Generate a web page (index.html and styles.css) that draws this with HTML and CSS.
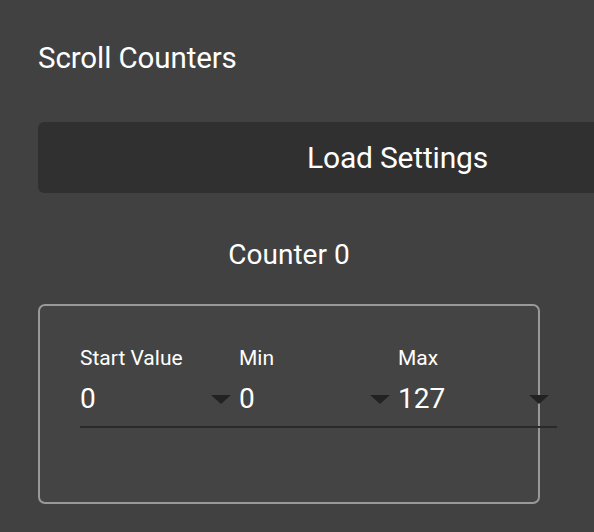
FILE: index.html
```html
<!DOCTYPE html>
<html lang="en">
<head>
<meta charset="utf-8">
<title>Scroll Counters</title>
<link rel="stylesheet" href="styles.css">
</head>
<body>
<div class="page">
  <h1 class="title">Scroll Counters</h1>
  <button class="load-btn" type="button">Load Settings</button>
  <section class="counter">
    <h2 class="counter-title">Counter 0</h2>
    <div class="counter-box">
      <div class="fields">
        <div class="field">
          <div class="field-label">Start Value</div>
          <div class="field-select"><span class="field-value">0</span><span class="caret"></span></div>
        </div>
        <div class="field">
          <div class="field-label">Min</div>
          <div class="field-select"><span class="field-value">0</span><span class="caret"></span></div>
        </div>
        <div class="field">
          <div class="field-label">Max</div>
          <div class="field-select"><span class="field-value">127</span><span class="caret"></span></div>
        </div>
      </div>
    </div>
  </section>
</div>
</body>
</html>
```

FILE: styles.css
```css
html, body {
  margin: 0;
  padding: 0;
  background: #414141;
  overflow: hidden;
}
body {
  font-family: Roboto, "Liberation Sans", sans-serif;
  color: #ffffff;
}
.page {
  padding: 40px 0 0 38px;
  width: 720px;
}
.title {
  margin: 0;
  font-size: 29.5px;
  line-height: 36px;
  font-weight: 400;
  letter-spacing: -0.1px;
}
.load-btn {
  display: block;
  margin-top: 46px;
  width: 719px;
  height: 71px;
  border: none;
  border-radius: 6px;
  background: #303030;
  color: #ffffff;
  font-family: Roboto, "Liberation Sans", sans-serif;
  font-size: 30px;
  line-height: 36px;
  padding: 0;
  letter-spacing: -0.2px;
}
.counter {
  width: 502px;
}
.counter-title {
  margin: 45px 0 0 0;
  font-size: 28px;
  line-height: 34px;
  font-weight: 400;
  text-align: center;
}
.counter-box {
  margin-top: 32px;
  box-sizing: border-box;
  width: 502px;
  height: 200px;
  border: 2px solid #999999;
  border-radius: 7px;
  background: #444444;
  padding: 40px 0 0 40px;
}
.fields {
  display: flex;
}
.field {
  flex: 0 0 159px;
  width: 159px;
}
.field-label {
  font-size: 21px;
  line-height: 25px;
}
.field-select {
  margin-top: 11px;
  display: flex;
  align-items: center;
  justify-content: space-between;
  padding-bottom: 10px;
  border-bottom: 2px solid #2a2a2a;
}
.field-value {
  font-size: 28px;
  line-height: 34px;
}
.caret {
  width: 0;
  height: 0;
  border-left: 10px solid transparent;
  border-right: 10px solid transparent;
  border-top: 9px solid #222222;
  margin-right: 8px;
}
```
